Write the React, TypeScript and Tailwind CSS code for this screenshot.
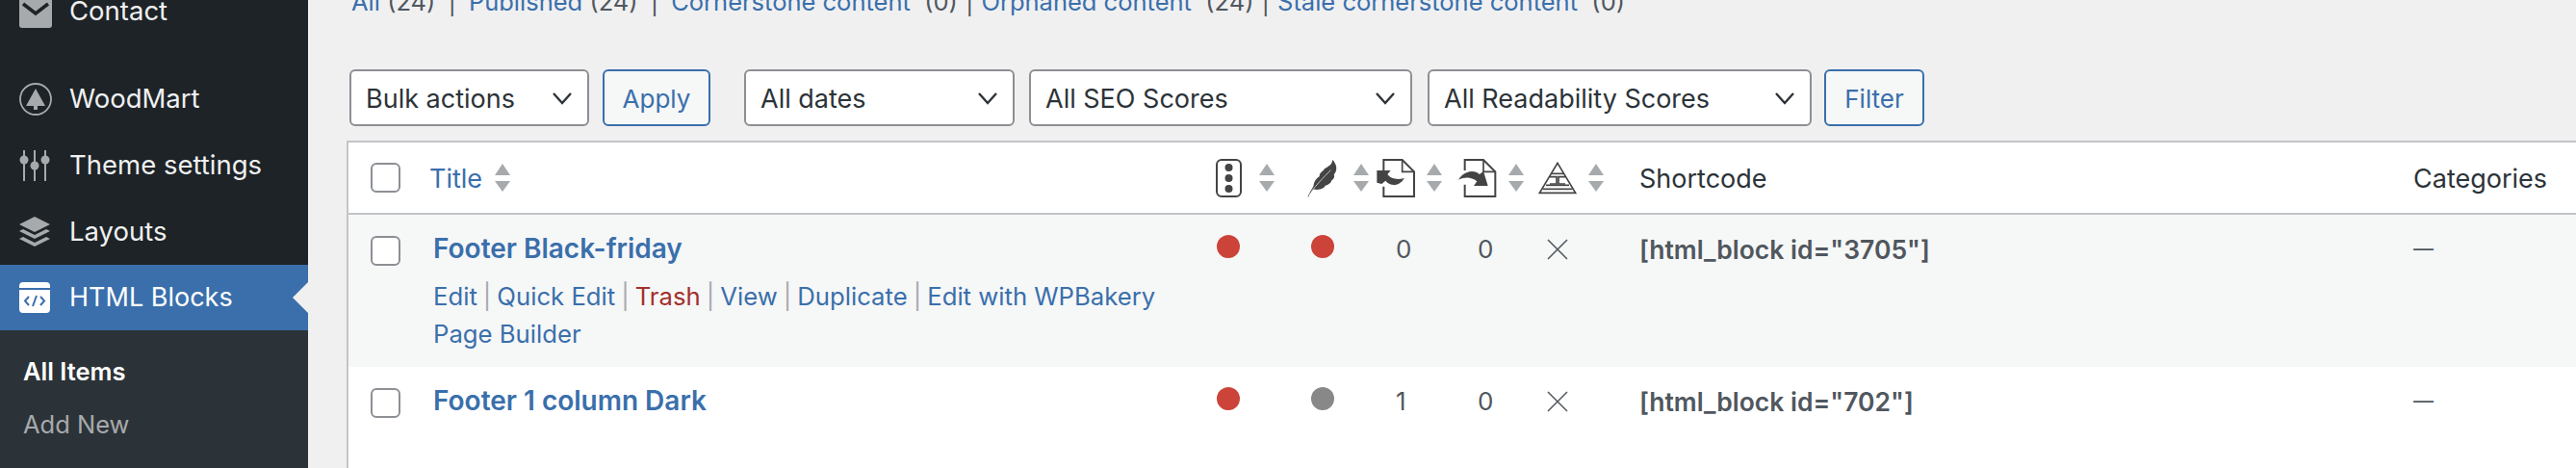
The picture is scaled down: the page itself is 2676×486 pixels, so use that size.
import React from "react";

const ROW_GRID = "grid grid-cols-[84px_817px_95px_72px_85px_83px_106px_803px_169px]";

function SortArrows({ className }: { className?: string }) {
  return (
    <svg viewBox="0 0 16 29" className={`w-4 h-[29px] shrink-0 fill-[#a7aaad] ${className ?? ""}`}>
      <path d="M8 0 16 12H0Z" />
      <path d="M0 18H16L8 29Z" />
    </svg>
  );
}

function TrafficIcon() {
  return (
    <svg viewBox="0 0 27 40" className="w-[27px] h-10">
      <rect x="1" y="1" width="25" height="38" rx="5" fill="none" stroke="#444" strokeWidth="2" />
      <circle cx="13.5" cy="9" r="4" fill="#444" />
      <circle cx="13.5" cy="20" r="4" fill="#444" />
      <circle cx="13.5" cy="31" r="4" fill="#444" />
    </svg>
  );
}

function FeatherIcon() {
  return (
    <svg viewBox="0 0 96 124" className="w-8 h-10">
      <path
        fill="#444"
        d="M0 122C6 108 12 98 18 88 20 72 28 62 38 56 36 50 42 44 52 36 50 32 66 26 74 18 78 12 80 6 80 2 86 10 94 20 92 34 90 44 88 46 84 50 88 54 84 66 76 70 78 74 66 86 56 86 56 92 40 102 20 98 12 104 6 112 2 123Z"
      />
      <path d="M12 104C30 82 48 62 74 36" stroke="#fff" strokeWidth="2" fill="none" />
    </svg>
  );
}

function LinkInIcon() {
  return (
    <svg viewBox="0 0 120 120" className="w-10 h-10">
      <path d="M22 36V3H80L117 40V117H22V86" fill="none" stroke="#444" strokeWidth="6" />
      <path d="M80 3V40H117" fill="none" stroke="#444" strokeWidth="5" />
      <path fill="#444" d="M1 36H44L34 48C44 62 64 66 86 60 76 82 46 90 28 68L16 78 1 74Z" />
    </svg>
  );
}

function LinkOutIcon() {
  return (
    <svg viewBox="0 0 120 120" className="w-10 h-10">
      <path d="M20 36V3H78L115 40V117H20V80" fill="none" stroke="#444" strokeWidth="6" />
      <path d="M78 3V40H115" fill="none" stroke="#444" strokeWidth="5" />
      <path fill="#444" d="M0 65C14 38 50 32 66 48L78 38 92 84H48L58 70C40 56 20 56 0 65Z" />
    </svg>
  );
}

function PyramidIcon() {
  return (
    <svg viewBox="0 0 120 100" fill="none" stroke="#444" className="w-10 h-[34px]">
      <path d="M60 3 116 96H4Z" strokeWidth="5" />
      <path d="M40 36H80" strokeWidth="5" />
      <path d="M24 72H96" strokeWidth="5" />
      <path d="M14 84H106" strokeWidth="5" />
      <path d="M36 46H57V68H36M84 46H63V68H84" strokeWidth="5" />
    </svg>
  );
}

function MailIcon() {
  return (
    <svg viewBox="0 0 34 34" className="w-[34px] h-[34px]">
      <rect x="0" y="0" width="34" height="34" rx="3" fill="#a7aaad" />
      <path d="M4 9 17 19 30 9" fill="none" stroke="#1d2327" strokeWidth="3.5" />
    </svg>
  );
}

function WoodMartIcon() {
  return (
    <svg viewBox="0 0 34 34" className="w-[34px] h-[34px]">
      <circle cx="17" cy="17" r="16" fill="none" stroke="#a7aaad" strokeWidth="1.8" />
      <path fill="#a7aaad" d="M17 6 27 24H19V28H15V24H7Z" />
    </svg>
  );
}

function SlidersIcon() {
  return (
    <svg viewBox="0 0 32 32" className="w-8 h-8" fill="#a7aaad">
      <rect x="4" y="0" width="2" height="32" />
      <rect x="15" y="0" width="2" height="32" />
      <rect x="26" y="0" width="2" height="32" />
      <circle cx="5" cy="10" r="4.5" />
      <circle cx="16" cy="16" r="4.5" />
      <circle cx="27" cy="10" r="4.5" />
    </svg>
  );
}

function LayersIcon() {
  return (
    <svg viewBox="0 0 32 32" className="w-8 h-8" fill="#a7aaad">
      <path d="M16 0 32 8 16 16 0 8Z" />
      <path d="M0 15 4 13 16 19 28 13 32 15 16 23Z" />
      <path d="M0 23 4 21 16 27 28 21 32 23 16 31Z" />
    </svg>
  );
}

function HtmlBlockIcon() {
  return (
    <svg viewBox="0 0 32 32" className="w-8 h-8">
      <path fill="#fff" d="M4 0H28A4 4 0 0 1 32 4V6H0V4A4 4 0 0 1 4 0Z" />
      <path fill="#fff" d="M0 8H32V28A4 4 0 0 1 28 32H4A4 4 0 0 1 0 28Z" />
      <path d="M10 15 6 19.5 10 24M22 15 26 19.5 22 24M18 14 14 25" fill="none" stroke="#3a6fab" strokeWidth="2" />
    </svg>
  );
}

function Chevron() {
  return (
    <svg viewBox="0 0 20 14" className="w-5 h-[14px]" fill="none" stroke="#2c3338" strokeWidth="2.4">
      <path d="M1 2 10 12 19 2" />
    </svg>
  );
}

function MenuItem({ icon, label }: { icon: React.ReactNode; label: string }) {
  return (
    <div className="flex items-center h-[69px] pl-5 text-[27.5px] text-[#f0f0f1]">
      <span className="w-[52px] shrink-0 flex">{icon}</span>
      {label}
    </div>
  );
}

function FilterSelect({ label, width }: { label: string; width: string }) {
  return (
    <div className={`${width} h-[59px] flex items-center justify-between pl-[15px] pr-4 bg-white border-2 border-[#8c8f94] rounded-md text-[27px] text-[#2c3338]`}>
      <span className="pt-1">{label}</span>
      <Chevron />
    </div>
  );
}

function OutlineButton({ label, width }: { label: string; width: string }) {
  return (
    <div className={`${width} h-[59px] flex items-center justify-center bg-[#f6f7f7] border-2 border-[#3a6fab] rounded-md text-[26px] text-[#3a6fab]`}>
      <span className="pt-[2px]">{label}</span>
    </div>
  );
}

function Checkbox() {
  return <div className="ml-[23px] w-[31px] h-[31px] bg-white border-2 border-[#8c8f94] rounded-md" />;
}

function HeaderIcon({ icon, offset }: { icon: React.ReactNode; offset: string }) {
  return (
    <div className="flex items-center">
      {icon}
      <SortArrows className={offset} />
    </div>
  );
}

function Dot({ color, className }: { color: string; className?: string }) {
  return <div className={`w-6 h-6 rounded-full ${color} ${className ?? ""}`} />;
}

function Sep() {
  return <span className="text-[#a7aaad] mx-[6px]">|</span>;
}

function TabCount({ name, count, last }: { name: string; count: number; last?: boolean }) {
  const isContent = name.endsWith("content");
  return (
    <span>
      <span className="text-[#3a6fab]">{name}</span>
      <span className="text-[#50575e]"> {isContent ? "\u00a0" : ""}({count})</span>
      {!last && <span className={isContent ? "text-[#50575e] mx-2" : "text-[#50575e] mx-[13px]"}>|</span>}
    </span>
  );
}

function CloseMark() {
  return (
    <svg viewBox="0 0 24 24" className="w-6 h-6 ml-2" fill="none" stroke="#50575e" strokeWidth="1.5">
      <path d="M2 2 22 22M22 2 2 22" />
    </svg>
  );
}

function Row({ title, seo, read, inCount, outCount, shortcode, actions, className }: {
  title: string;
  seo: string;
  read: string;
  inCount: number;
  outCount: number;
  shortcode: string;
  actions?: boolean;
  className: string;
}) {
  return (
    <div className={`${ROW_GRID} ${className} text-[26px] leading-9 text-[#50575e]`}>
      <div className="pt-[22px]"><Checkbox /></div>
      <div className="pt-[17px] pl-[4px]">
        <div className="text-[28px] font-semibold text-[#3a6fab]">{title}</div>
        {actions && (
          <div className="mt-[12px] pr-[40px] text-[25.7px] leading-[39px] text-[#3a6fab]">
            Edit<Sep />Quick Edit<Sep /><span className="text-[#a4302b]">Trash</span><Sep />View<Sep />Duplicate<Sep />Edit with WPBakery Page Builder
          </div>
        )}
      </div>
      <div className="pt-[21px] pl-px"><Dot color={seo} /></div>
      <div className="pt-[21px] pl-1"><Dot color={read} /></div>
      <div className="pt-[18px] pl-5">{inCount}</div>
      <div className="pt-[18px] pl-5">{outCount}</div>
      <div className="pt-6"><CloseMark /></div>
      <div className="pt-[18px] -ml-px text-[26.5px] font-semibold">{shortcode}</div>
      <div className="pt-[18px] text-[21px]">—</div>
    </div>
  );
}

export default function App() {
  return (
    <div className="flex h-[486px] overflow-hidden bg-[#f0f0f1] font-['Inter',sans-serif]">
      {/* Admin menu */}
      <aside className="w-80 shrink-0 flex flex-col bg-[#1d2327]">
        <div className="-mt-[23px] mb-[22px]">
          <MenuItem icon={<MailIcon />} label="Contact" />
        </div>
        <MenuItem icon={<WoodMartIcon />} label="WoodMart" />
        <MenuItem icon={<SlidersIcon />} label="Theme settings" />
        <MenuItem icon={<LayersIcon />} label="Layouts" />
        <div className="relative flex items-center h-[68px] pl-5 bg-[#3a6fab] text-[27px] text-white">
          <span className="w-[52px] shrink-0 flex"><HtmlBlockIcon /></span>
          HTML Blocks
          <div className="absolute right-0 top-[18px] w-0 h-0 border-y-[16px] border-y-transparent border-r-[16px] border-r-[#f0f0f1]" />
        </div>
        <div className="flex-1 bg-[#2c3338] pt-[15px] pl-6 text-[25.5px] leading-[55px]">
          <div className="font-semibold text-white">All Items</div>
          <div className="text-[#a7aaad]">Add New</div>
        </div>
      </aside>

      {/* List table */}
      <main className="flex-1 min-w-0 pl-10">
        <div className="-mt-[16px] pl-[5px] h-9 text-[25.5px] leading-9 whitespace-nowrap">
          <TabCount name="All" count={24} />
          <TabCount name="Published" count={24} />
          <TabCount name="Cornerstone content" count={0} />
          <TabCount name="Orphaned content" count={24} />
          <TabCount name="Stale cornerstone content" count={0} last />
        </div>

        <div className="mt-[52px] ml-[3px] flex">
          <FilterSelect label="Bulk actions" width="w-[249px]" />
          <div className="ml-[14px]"><OutlineButton label="Apply" width="w-[112px]" /></div>
          <div className="ml-[35px]"><FilterSelect label="All dates" width="w-[281px]" /></div>
          <div className="ml-[15px]"><FilterSelect label="All SEO Scores" width="w-[398px]" /></div>
          <div className="ml-[16px]"><FilterSelect label="All Readability Scores" width="w-[399px]" /></div>
          <div className="ml-[13px]"><OutlineButton label="Filter" width="w-[104px]" /></div>
        </div>

        <div className="mt-[15px] border-l-2 border-t-2 border-[#c3c4c7] bg-white">
          <div className={`${ROW_GRID} h-[75px] items-center border-b-2 border-[#c3c4c7] text-[27px] text-[#2c3338]`}>
            <Checkbox />
            <div className="flex items-center text-[#3a6fab]">
              <span className="pt-1">Title</span>
              <SortArrows className="ml-[13px]" />
            </div>
            <HeaderIcon icon={<TrafficIcon />} offset="ml-[18px]" />
            <HeaderIcon icon={<FeatherIcon />} offset="ml-4" />
            <HeaderIcon icon={<LinkInIcon />} offset="ml-3" />
            <HeaderIcon icon={<LinkOutIcon />} offset="ml-3" />
            <HeaderIcon icon={<PyramidIcon />} offset="ml-3" />
            <div className="-ml-px pt-1">Shortcode</div>
            <div className="pt-1">Categories</div>
          </div>
          <Row
            className="h-[158px] bg-[#f6f7f7]"
            title="Footer Black-friday"
            seo="bg-[#cb4339]"
            read="bg-[#cb4339]"
            inCount={0}
            outCount={0}
            shortcode={'[html_block id="3705"]'}
            actions
          />
          <Row
            className="h-[105px] bg-white"
            title="Footer 1 column Dark"
            seo="bg-[#cb4339]"
            read="bg-[#888888]"
            inCount={1}
            outCount={0}
            shortcode={'[html_block id="702"]'}
          />
        </div>
      </main>
    </div>
  );
}
